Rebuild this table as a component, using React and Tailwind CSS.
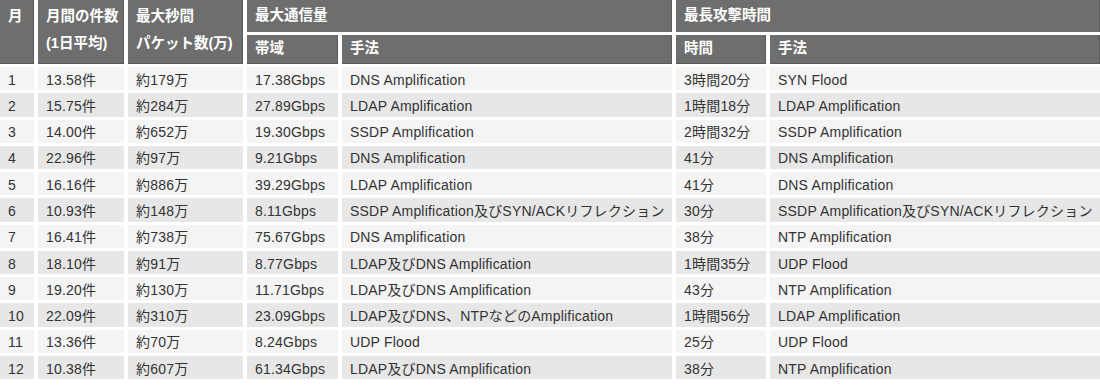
const rows = [
  ["1", "13.58件", "約179万", "17.38Gbps", "DNS Amplification", "3時間20分", "SYN Flood"],
  ["2", "15.75件", "約284万", "27.89Gbps", "LDAP Amplification", "1時間18分", "LDAP Amplification"],
  ["3", "14.00件", "約652万", "19.30Gbps", "SSDP Amplification", "2時間32分", "SSDP Amplification"],
  ["4", "22.96件", "約97万", "9.21Gbps", "DNS Amplification", "41分", "DNS Amplification"],
  ["5", "16.16件", "約886万", "39.29Gbps", "LDAP Amplification", "41分", "DNS Amplification"],
  ["6", "10.93件", "約148万", "8.11Gbps", "SSDP Amplification及びSYN/ACKリフレクション", "30分", "SSDP Amplification及びSYN/ACKリフレクション"],
  ["7", "16.41件", "約738万", "75.67Gbps", "DNS Amplification", "38分", "NTP Amplification"],
  ["8", "18.10件", "約91万", "8.77Gbps", "LDAP及びDNS Amplification", "1時間35分", "UDP Flood"],
  ["9", "19.20件", "約130万", "11.71Gbps", "LDAP及びDNS Amplification", "43分", "NTP Amplification"],
  ["10", "22.09件", "約310万", "23.09Gbps", "LDAP及びDNS、NTPなどのAmplification", "1時間56分", "LDAP Amplification"],
  ["11", "13.36件", "約70万", "8.24Gbps", "UDP Flood", "25分", "UDP Flood"],
  ["12", "10.38件", "約607万", "61.34Gbps", "LDAP及びDNS Amplification", "38分", "NTP Amplification"],
];

const th = "bg-[#6e6e6e] text-white font-bold text-[14.5px] pl-2 border-r border-[#5a5a5a]";

export default function App() {
  return (
    <div
      className="w-[1100px] h-[386px] overflow-hidden bg-white text-[14px]"
      style={{ fontFamily: '"Liberation Sans", "Noto Sans CJK JP", sans-serif' }}
    >
      <div className="grid grid-cols-[34px_86px_115px_91px_330px_90px_330px] grid-rows-[32px_29px] auto-rows-[23.27px] gap-x-[4px] gap-y-[3px]">
        <div className={`${th} row-span-2 pt-[3px] leading-[27px] border-b`}>月</div>
        <div className={`${th} row-span-2 pt-[3px] leading-[27px] border-b`}>
          月間の件数
          <br />
          (1日平均)
        </div>
        <div className={`${th} row-span-2 pt-[3px] leading-[27px] border-b`}>
          最大秒間
          <br />
          パケット数(万)
        </div>
        <div className={`${th} col-span-2 flex items-center`}>最大通信量</div>
        <div className={`${th} col-span-2 flex items-center`}>最長攻撃時間</div>
        <div className={`${th} flex items-center border-b`}>帯域</div>
        <div className={`${th} flex items-center border-b`}>手法</div>
        <div className={`${th} flex items-center border-b`}>時間</div>
        <div className={`${th} flex items-center border-b`}>手法</div>
        {rows.map((r, i) =>
          r.map((c, j) => (
            <div
              key={`${i}-${j}`}
              className={`${i % 2 === 0 ? "bg-[#f3f4f3]" : "bg-[#e7e7e7]"} text-[#333333] tracking-[0.2px] pl-2 pt-[3px] flex items-center whitespace-nowrap`}
            >
              {c}
            </div>
          ))
        )}
      </div>
    </div>
  );
}
